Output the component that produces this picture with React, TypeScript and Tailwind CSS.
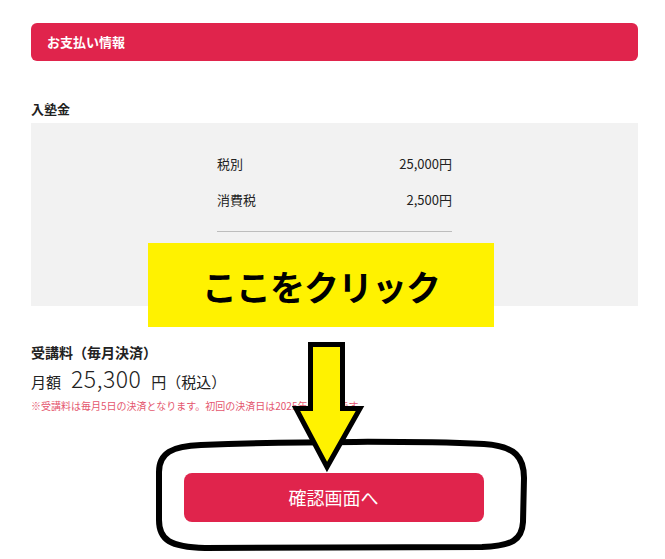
const font = { fontFamily: '"Noto Sans CJK JP", "Noto Sans", sans-serif' };

function FeeRow({ label, value }: { label: string; value: string }) {
  return (
    <div className="flex h-[20px] items-center justify-between text-[13px] leading-[20px] text-[#222]">
      <span>{label}</span>
      <span>{value}</span>
    </div>
  );
}

function ClickArrow() {
  return (
    <svg className="absolute left-0 top-0" width="665" height="559" aria-hidden>
      <path
        d="M201 445 C 300 441, 420 441, 484 444 C 516 446, 524 458, 524 478 L 523 522 C 522 540, 512 546, 482 547 L 205 548 C 170 547, 159 540, 159 520 L 159 472 C 159 453, 172 446, 201 445 Z"
        fill="none"
        stroke="#000"
        strokeWidth="6"
      />
      <polygon
        points="310.5,344.5 342.5,344.5 342.5,408.5 360,408.5 327,467 296,408.5 310.5,408.5"
        fill="#fff200"
        stroke="#000"
        strokeWidth="5"
        strokeLinejoin="miter"
      />
    </svg>
  );
}

export default function App() {
  return (
    <div className="relative h-[559px] w-[665px] overflow-hidden bg-white" style={font}>
      <div className="pl-[31px] pr-[27px] pt-[23px]">
        <div className="flex h-[38px] items-center rounded-md bg-[#e0244c] pl-[16px]">
          <h2 className="text-[13px] font-bold text-white">お支払い情報</h2>
        </div>

        <p className="mt-[38px] text-[13px] font-bold leading-[20px] text-[#222]">入塾金</p>
        <div className="mt-[4px] h-[183px] bg-[#f2f2f2] pt-[31px]">
          <div className="mx-auto w-[235px]">
            <FeeRow label="税別" value="25,000円" />
            <div className="mt-[16px]">
              <FeeRow label="消費税" value="2,500円" />
            </div>
            <div className="mt-[21px] border-t border-[#bdbdbd]" />
          </div>
        </div>

        <p className="mt-[36px] text-[14px] font-bold leading-[20px] text-[#222]">受講料（毎月決済）</p>
        <div className="mt-[2px] flex items-baseline gap-[10px] text-[#222]">
          <span className="text-[15px]">月額</span>
          <span className="text-[23px] font-light leading-[28px] tracking-[0.5px]">25,300</span>
          <span className="text-[15px]">円（税込）</span>
        </div>
        <p className="mt-[5px] text-[10px] leading-[14px] text-[#e4566e]">
          ※受講料は毎月5日の決済となります。初回の決済日は2025年6月5日です。
        </p>

        <div className="mt-[60px] flex justify-center pr-[2px]">
          <button className="flex h-[49px] w-[300px] items-center justify-center rounded-lg bg-[#e0244c] text-[18px] text-white">
            確認画面へ
          </button>
        </div>
      </div>

      <div className="absolute left-[148px] top-[243px] flex h-[84px] w-[346px] items-center justify-center bg-[#fff200]">
        <span className="text-[35px] font-bold leading-none tracking-[-1px] text-black">ここをクリック</span>
      </div>
      <ClickArrow />
    </div>
  );
}
